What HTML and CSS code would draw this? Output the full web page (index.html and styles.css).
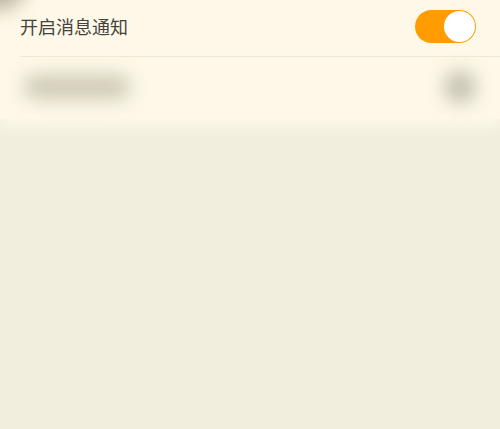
FILE: index.html
```html
<!DOCTYPE html>
<html lang="zh-CN">
<head>
    <meta charset="UTF-8">
    <meta name="viewport" content="width=device-width, initial-scale=1.0">
    <title>消息通知</title>
    <link rel="stylesheet" href="styles.css">
</head>
<body>

<div class="corner-shade"></div>

<div class="card">
    <div class="row">
        <span class="label">开启消息通知</span>
        <label class="switch">
            <input type="checkbox" checked>
            <span class="track"><span class="knob"></span></span>
        </label>
    </div>
    <div class="row row-loading">
        <div class="skeleton-bar"></div>
        <div class="skeleton-dot"></div>
    </div>
</div>

</body>
</html>
```

FILE: styles.css
```css
body {
    font-family: "Noto Sans CJK SC", "Noto Sans", sans-serif;
    background-color: #f2eedd;
    margin: 0;
    height: 429px;
    overflow: hidden;
    position: relative;
}
.corner-shade {
    position: absolute;
    left: -35px;
    top: -32px;
    width: 60px;
    height: 42px;
    border-radius: 50%;
    background: rgba(90, 80, 60, 0.4);
    filter: blur(9px);
}
.card {
    background: #fdf8e7;
    padding-left: 20px;
    box-shadow: 0 8px 12px 0 #fdf8e7;
}
.row {
    display: flex;
    align-items: center;
    justify-content: space-between;
    height: 56px;
    padding-right: 24px;
    border-bottom: 1px solid #efe9d4;
}
.row-loading {
    height: 60px;
    border-bottom: none;
    padding-right: 24px;
    padding-bottom: 2px;
}
.label {
    font-size: 18px;
    color: #45433e;
    margin-top: -4px;
}
.switch {
    display: block;
    margin-top: -4px;
}
.switch input {
    display: none;
}
.track {
    display: flex;
    justify-content: flex-end;
    align-items: center;
    width: 61px;
    height: 33px;
    padding: 1px;
    box-sizing: border-box;
    border-radius: 17px;
    background: #ff9d00;
}
.knob {
    width: 31px;
    height: 31px;
    border-radius: 50%;
    background: #fff;
}
.skeleton-bar {
    width: 106px;
    height: 24px;
    margin-left: 4px;
    border-radius: 12px;
    background: #cfcab8;
    filter: blur(9px);
}
.skeleton-dot {
    width: 32px;
    height: 32px;
    border-radius: 50%;
    background: #c6c1b0;
    filter: blur(9px);
}
```
